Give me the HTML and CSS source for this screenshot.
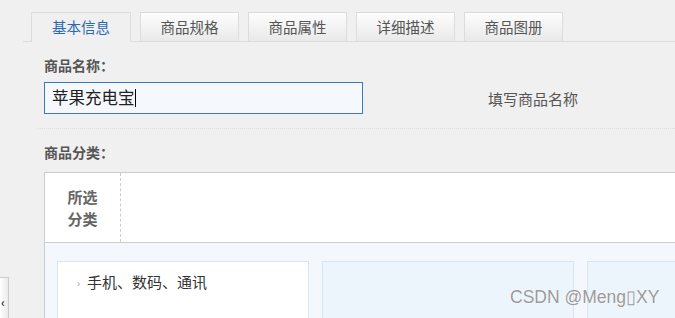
FILE: index.html
```html
<!DOCTYPE html>
<html lang="zh-CN">
<head>
	<meta charset="UTF-8">
	<title>商品编辑</title>
	<link rel="stylesheet" href="styles.css">
</head>
<body>
	<ul class="tabs">
		<li class="tab active">基本信息</li>
		<li class="tab">商品规格</li>
		<li class="tab">商品属性</li>
		<li class="tab">详细描述</li>
		<li class="tab">商品图册</li>
	</ul>

	<div class="field">
		<p class="label">商品名称：</p>
		<div class="row">
			<div class="input">苹果充电宝<span class="caret"></span></div>
			<span class="hint">填写商品名称</span>
		</div>
	</div>

	<div class="field">
		<p class="label">商品分类：</p>
		<div class="cat">
			<div class="cat-head">
				<div class="cat-title">所选<br>分类</div>
				<div class="cat-chosen"></div>
			</div>
			<div class="cat-body">
				<ul class="col first">
					<li><span class="arr">›</span>手机、数码、通讯</li>
				</ul>
				<ul class="col"></ul>
				<ul class="col"></ul>
			</div>
		</div>
	</div>

	<div class="side-toggle">‹</div>
	<div class="mark">CSDN @Meng▯XY</div>
</body>
</html>
```

FILE: styles.css
```css
html,body,ul,p{
	margin: 0;padding: 0;
}
ul{
	list-style: none;
}
body{
	background: #f0f0f0;
	font-family: "Noto Sans CJK SC", "Liberation Sans", sans-serif;
	font-size: 14px;color: #555;
	overflow: hidden;height: 318px;position: relative;
}
.tabs{
	display: flex;gap: 9px;
	margin-left: 23px;padding: 12px 0 0 8px;
	height: 29px;border-bottom: 1px solid #dcdcdc;
}
.tab{
	width: 99px;height: 29px;box-sizing: border-box;
	border: 1px solid #dcdcdc;border-bottom: none;
	background: linear-gradient(#fdfdfd, #e9e9e9);
	text-align: center;line-height: 27px;color: #555;font-size: 14.5px;
}
.tab.active{
	background: #f0f0f0;color: #2b68b0;
	height: 30px;margin-bottom: -1px;width: 100px;
}
.field{
	margin-left: 38px;padding-left: 6px;
}
.label{
	padding-top: 13px;line-height: 20px;
	font-size: 14px;font-weight: bold;color: #555;
}
.row{
	display: flex;align-items: center;
	margin: 7px 0 0 -6px;padding: 0 0 14px 6px;
	border-bottom: 1px dotted #dedede;
}
.input{
	width: 319px;height: 32px;box-sizing: border-box;
	border: 1px solid #3b78bd;background: #f5f9fd;
	padding-left: 7px;line-height: 29px;
	font-size: 16.5px;color: #222;
}
.caret{
	display: inline-block;width: 1px;height: 18px;background: #000;vertical-align: -3px;
}
.hint{
	margin-left: 125px;font-size: 15px;color: #555;
}
.cat{
	margin-top: 10px;width: 700px;
	border: 1px solid #ccc;background: #fff;
}
.cat-head{
	display: flex;height: 69px;
}
.cat-title{
	width: 75px;border-right: 1px dashed #ccc;
	display: flex;align-items: center;justify-content: center;
	line-height: 22px;font-size: 15px;font-weight: bold;color: #666;
}
.cat-body{
	display: flex;gap: 13px;
	border-top: 1px solid #ccc;background: #f4f8fc;
	padding: 18px 0 0 12px;height: 80px;
}
.col{
	width: 252px;flex-shrink: 0;box-sizing: border-box;
	border: 1px solid #d6e6f4;background: #edf5fc;
	padding-top: 8px;
}
.col.first{
	background: #fff;
}
.col li{
	padding-left: 19px;line-height: 24px;color: #333;font-size: 15px;
}
.arr{
	display: inline-block;width: 10px;font-size: 10px;color: #999;vertical-align: 1px;
}
.side-toggle{
	position: absolute;left: 0;top: 277px;
	width: 9px;height: 50px;box-sizing: border-box;
	border: 1px solid #ccc;border-left: none;
	background: linear-gradient(90deg, #fff, #eaeaea);
	font-size: 12px;line-height: 48px;text-indent: 1px;color: #333;font-weight: bold;
}
.mark{
	position: absolute;left: 510px;top: 287px;
	font-family: "Liberation Sans", sans-serif;font-size: 17.5px;color: #9a9a9a;
	text-shadow: 0 0 1px #fff, 0 0 1px #fff;
}
```
